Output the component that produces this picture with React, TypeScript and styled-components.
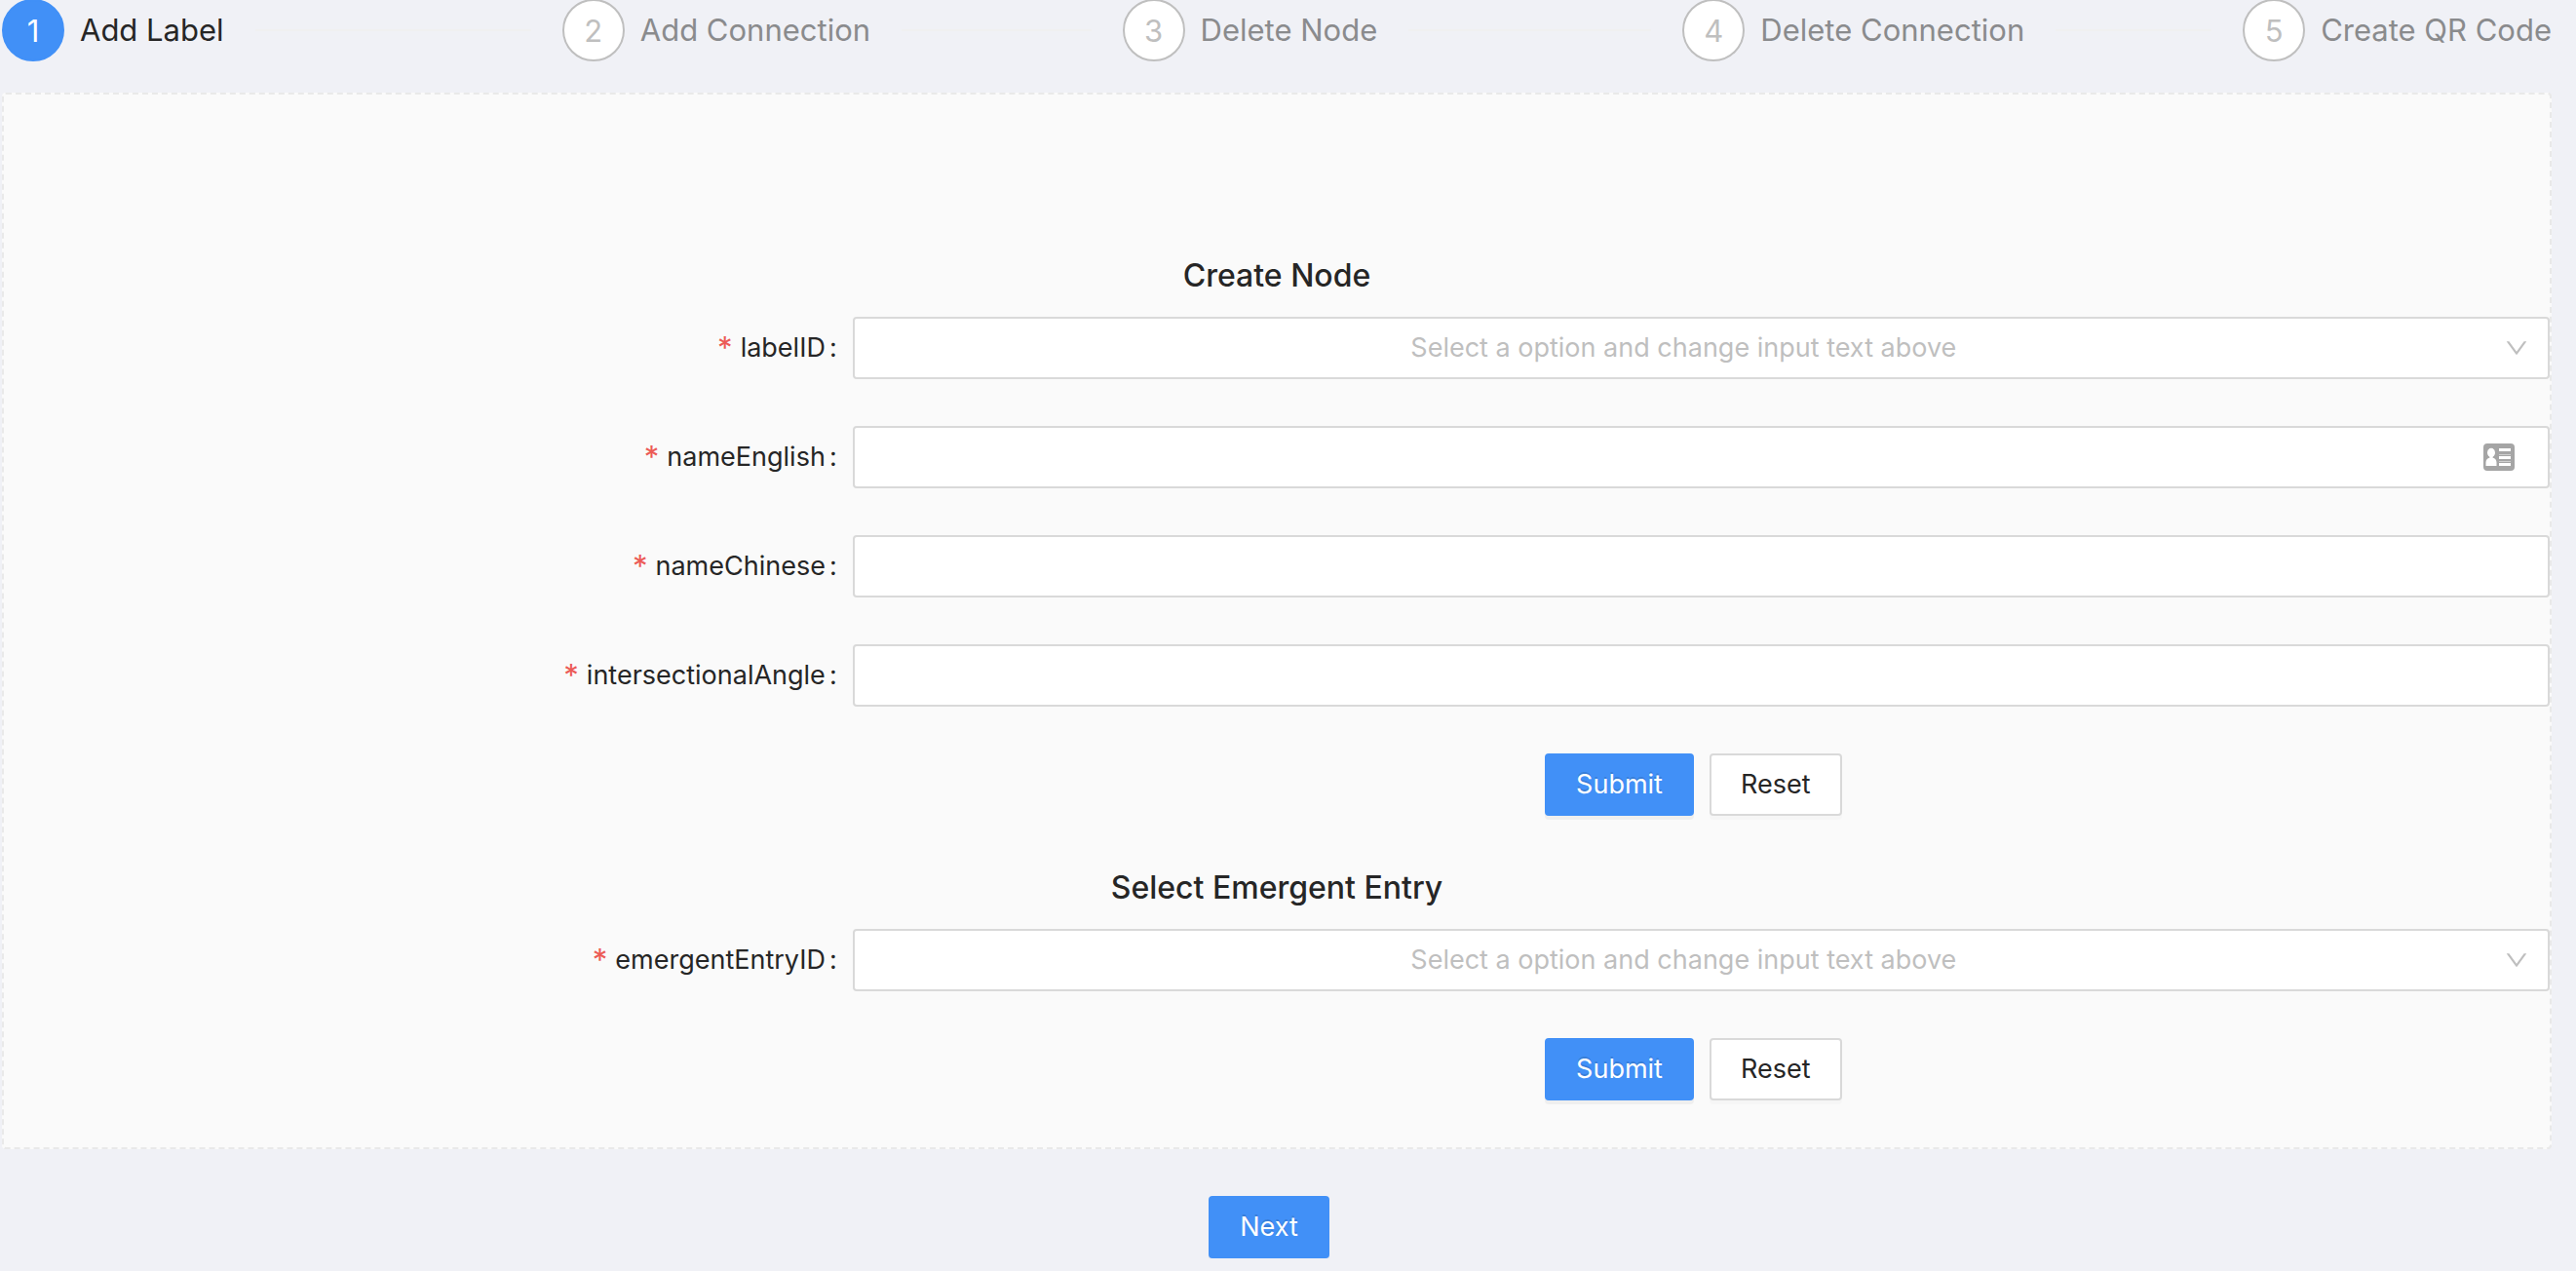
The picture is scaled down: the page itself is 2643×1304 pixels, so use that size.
import React from "react";
import styled, { createGlobalStyle } from "styled-components";

const GlobalStyle = createGlobalStyle`
  *, *::before, *::after { box-sizing: border-box; }
  body {
    margin: 0;
    background: #f0f1f6;
    color: #262626;
    font-family: Inter, "Liberation Sans", sans-serif;
    font-size: 27px;
    line-height: 44px;
    overflow-x: hidden;
  }
`;

const Page = styled.main`
  margin-top: -1px;
  padding: 0 25px 0 2px;
`;

const Steps = styled.ol`
  display: flex;
  gap: 32px;
  margin: 0 0 32px;
  padding: 0;
  list-style: none;
`;

const Step = styled.li`
  display: flex;
  align-items: center;
  flex: 1 1 0;
  gap: 16px;
  white-space: nowrap;

  &:last-child {
    flex: none;
  }

  &:not(:last-child)::after {
    content: "";
    flex: 1;
    height: 2px;
    margin-left: 16px;
    background: #f0f0f0;
  }
`;

const StepNumber = styled.span<{ $active: boolean }>`
  flex: none;
  width: 64px;
  height: 64px;
  border: 2px solid ${(p) => (p.$active ? "#4190f7" : "#bfbfbf")};
  border-radius: 50%;
  background: ${(p) => (p.$active ? "#4190f7" : "#fff")};
  color: ${(p) => (p.$active ? "#fff" : "#bfbfbf")};
  font-size: 31px;
  line-height: 62px;
  text-align: center;
`;

const StepTitle = styled.span<{ $active: boolean }>`
  color: ${(p) => (p.$active ? "#262626" : "#8a8b8d")};
  font-size: 31px;
  line-height: 64px;
`;

const Panel = styled.section`
  margin-bottom: 48px;
  padding-top: 160px;
  border: 2px dashed #e9e9e9;
  border-radius: 4px;
  background: #fafafa;
`;

const Heading = styled.h3`
  margin: 0 0 16px;
  font-size: 32px;
  font-weight: 500;
  line-height: 52px;
  text-align: center;
`;

const Row = styled.div`
  display: grid;
  grid-template-columns: 1fr 2fr;
  margin-bottom: 48px;
`;

const Label = styled.label`
  display: flex;
  justify-content: flex-end;
  align-items: center;
  height: 64px;
  padding-right: 16px;

  &::before {
    content: "*";
    margin-right: 8px;
    color: #ec5b56;
    font-size: 31px;
  }

  &::after {
    content: ":";
    margin-left: 4px;
  }
`;

const Control = styled.div`
  position: relative;
  grid-column: 2;
`;

const fieldStyle = `
  display: block;
  width: 100%;
  height: 64px;
  border: 2px solid #d9d9d9;
  border-radius: 4px;
  background: #fff;
  font: inherit;
  outline: none;
`;

const Input = styled.input`
  ${fieldStyle}
  padding: 0 22px;
`;

const Select = styled.select`
  ${fieldStyle}
  appearance: none;
  padding: 0 58px 0 22px;
  color: #bfbfbf;
  text-align: center;
  text-align-last: center;
`;

const Chevron = styled.svg`
  position: absolute;
  top: 20px;
  right: 22px;
  width: 24px;
  height: 24px;
  fill: #bfbfbf;
  pointer-events: none;
`;

const ContactCard = styled.svg`
  position: absolute;
  top: 18px;
  right: 36px;
  width: 32px;
  height: 28px;
  pointer-events: none;
`;

const Actions = styled.div`
  grid-column: 2;
  display: flex;
  justify-content: center;
  gap: 16px;
  padding-right: 16px;
`;

const Button = styled.button<{ $primary?: boolean }>`
  height: 64px;
  padding: 0 30px;
  border: 2px solid ${(p) => (p.$primary ? "#4190f7" : "#d9d9d9")};
  border-radius: 4px;
  background: ${(p) => (p.$primary ? "#4190f7" : "#fff")};
  box-shadow: 0 4px 0 ${(p) => (p.$primary ? "rgba(0, 0, 0, 0.045)" : "rgba(0, 0, 0, 0.016)")};
  color: ${(p) => (p.$primary ? "#fff" : "#262626")};
  font: inherit;
  text-shadow: ${(p) => (p.$primary ? "0 -2px 0 rgba(0, 0, 0, 0.12)" : "none")};
  cursor: pointer;
`;

const steps = ["Add Label", "Add Connection", "Delete Node", "Delete Connection", "Create QR Code"];

function SelectField({ name }: { name: string }) {
  return (
    <Row>
      <Label htmlFor={name}>{name}</Label>
      <Control>
        <Select id={name} defaultValue="">
          <option value="">Select a option and change input text above</option>
        </Select>
        <Chevron viewBox="64 64 896 896" aria-hidden="true">
          <path d="M884 256h-75c-5.100 0-9.900 2.500-12.900 6.600L512 654.200 227.900 262.600c-3-4.100-7.800-6.600-12.900-6.600h-75c-6.500 0-10.300 7.400-6.500 12.700l352.600 486.100c12.800 17.600 39 17.600 51.700 0l352.600-486.100c3.900-5.300.1-12.700-6.400-12.700z" />
        </Chevron>
      </Control>
    </Row>
  );
}

function TextField({ name, contact }: { name: string; contact?: boolean }) {
  return (
    <Row>
      <Label htmlFor={name}>{name}</Label>
      <Control>
        <Input id={name} type="text" />
        {contact && (
          <ContactCard viewBox="0 0 32 28" aria-hidden="true">
            <rect width="32" height="28" rx="4" fill="#a5a5a5" />
            <g fill="#fff">
              <ellipse cx="8" cy="9.500" rx="4" ry="4.700" />
              <path d="M6.500 12h3v2.500c2.500.5 4 2.500 4 5V23h-11v-3.500c0-2.500 1.500-4.500 4-5z" />
              <path d="M16 5h12v3H16zM16 13h12v3H16zM16 20h12v3H16z" />
            </g>
            <path d="M16 11.500h12M16 18.500h12" stroke="#cfcfcf" />
          </ContactCard>
        )}
      </Control>
    </Row>
  );
}

function FormActions() {
  return (
    <Row>
      <Actions>
        <Button $primary type="submit">Submit</Button>
        <Button type="reset">Reset</Button>
      </Actions>
    </Row>
  );
}

const keepOnPage = (e: React.FormEvent) => e.preventDefault();

export default function App() {
  return (
    <>
      <GlobalStyle />
      <Page>
        <Steps>
          {steps.map((title, i) => (
            <Step key={title} aria-current={i === 0 ? "step" : undefined}>
              <StepNumber $active={i === 0}>{i + 1}</StepNumber>
              <StepTitle $active={i === 0}>{title}</StepTitle>
            </Step>
          ))}
        </Steps>
        <Panel>
          <form onSubmit={keepOnPage}>
            <Heading>Create Node</Heading>
            <SelectField name="labelID" />
            <TextField name="nameEnglish" contact />
            <TextField name="nameChinese" />
            <TextField name="intersectionalAngle" />
            <FormActions />
          </form>
          <form onSubmit={keepOnPage}>
            <Heading>Select Emergent Entry</Heading>
            <SelectField name="emergentEntryID" />
            <FormActions />
          </form>
        </Panel>
        <Actions>
          <Button $primary type="button">Next</Button>
        </Actions>
      </Page>
    </>
  );
}
